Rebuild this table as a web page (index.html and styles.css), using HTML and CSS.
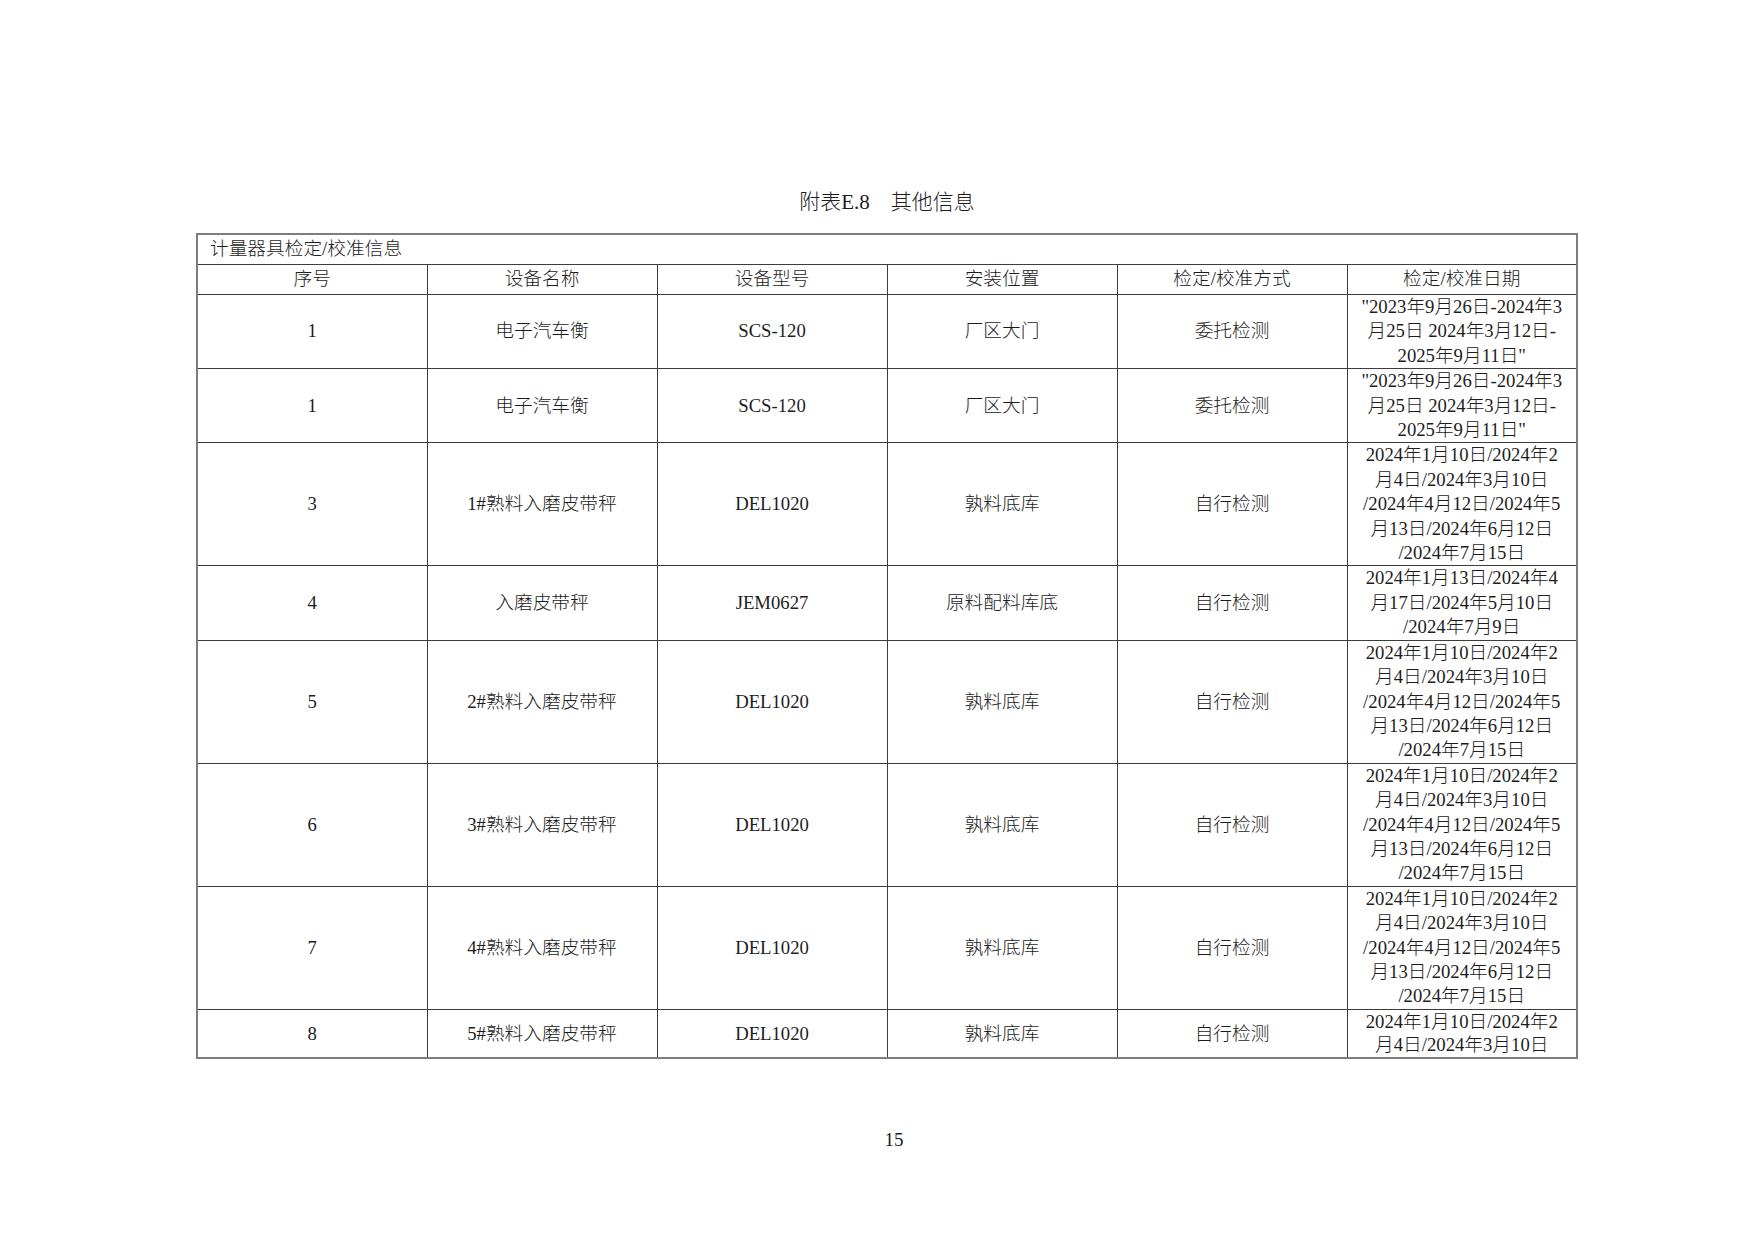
FILE: index.html
```html
<!DOCTYPE html>
<html lang="zh-CN">
<head>
<meta charset="utf-8">
<title>附表E.8 其他信息</title>
<link rel="stylesheet" href="styles.css">
</head>
<body>
<div class="page">
  <h1 class="title">附表E.8&nbsp;&nbsp;&nbsp;&nbsp;其他信息</h1>
  <table class="tbl">
    <colgroup>
      <col><col><col><col><col><col>
    </colgroup>
    <tbody>
      <tr class="single">
        <td class="caption-cell" colspan="6">计量器具检定/校准信息</td>
      </tr>
      <tr class="single">
        <td>序号</td>
        <td>设备名称</td>
        <td>设备型号</td>
        <td>安装位置</td>
        <td>检定/校准方式</td>
        <td>检定/校准日期</td>
      </tr>
      <tr>
        <td>1</td>
        <td>电子汽车衡</td>
        <td>SCS-120</td>
        <td>厂区大门</td>
        <td>委托检测</td>
        <td>"2023年9月26日-2024年3<br>月25日 2024年3月12日-<br>2025年9月11日"</td>
      </tr>
      <tr>
        <td>1</td>
        <td>电子汽车衡</td>
        <td>SCS-120</td>
        <td>厂区大门</td>
        <td>委托检测</td>
        <td>"2023年9月26日-2024年3<br>月25日 2024年3月12日-<br>2025年9月11日"</td>
      </tr>
      <tr>
        <td>3</td>
        <td>1#熟料入磨皮带秤</td>
        <td>DEL1020</td>
        <td>孰料底库</td>
        <td>自行检测</td>
        <td>2024年1月10日/2024年2<br>月4日/2024年3月10日<br>/2024年4月12日/2024年5<br>月13日/2024年6月12日<br>/2024年7月15日</td>
      </tr>
      <tr>
        <td>4</td>
        <td>入磨皮带秤</td>
        <td>JEM0627</td>
        <td>原料配料库底</td>
        <td>自行检测</td>
        <td>2024年1月13日/2024年4<br>月17日/2024年5月10日<br>/2024年7月9日</td>
      </tr>
      <tr>
        <td>5</td>
        <td>2#熟料入磨皮带秤</td>
        <td>DEL1020</td>
        <td>孰料底库</td>
        <td>自行检测</td>
        <td>2024年1月10日/2024年2<br>月4日/2024年3月10日<br>/2024年4月12日/2024年5<br>月13日/2024年6月12日<br>/2024年7月15日</td>
      </tr>
      <tr>
        <td>6</td>
        <td>3#熟料入磨皮带秤</td>
        <td>DEL1020</td>
        <td>孰料底库</td>
        <td>自行检测</td>
        <td>2024年1月10日/2024年2<br>月4日/2024年3月10日<br>/2024年4月12日/2024年5<br>月13日/2024年6月12日<br>/2024年7月15日</td>
      </tr>
      <tr>
        <td>7</td>
        <td>4#熟料入磨皮带秤</td>
        <td>DEL1020</td>
        <td>孰料底库</td>
        <td>自行检测</td>
        <td>2024年1月10日/2024年2<br>月4日/2024年3月10日<br>/2024年4月12日/2024年5<br>月13日/2024年6月12日<br>/2024年7月15日</td>
      </tr>
      <tr class="last">
        <td>8</td>
        <td>5#熟料入磨皮带秤</td>
        <td>DEL1020</td>
        <td>孰料底库</td>
        <td>自行检测</td>
        <td>2024年1月10日/2024年2<br>月4日/2024年3月10日</td>
      </tr>
    </tbody>
  </table>
  <div class="pageno">15</div>
</div>
</body>
</html>
```

FILE: styles.css
```css
html, body {
  margin: 0;
  padding: 0;
  background: #ffffff;
}

body {
  color: #1c1c1c;
  font-family: "Liberation Serif", "Noto Sans CJK SC", serif;
  font-weight: 300;
}

.page {
  width: 1382px;
  padding: 187px 0 0 196px;
}

.title {
  margin: 0 0 16px;
  height: 30px;
  font-size: 21px;
  line-height: 30px;
  font-weight: 300;
  text-align: center;
}

.tbl {
  width: 1382px;
  border-collapse: collapse;
  table-layout: fixed;
  font-size: 18.7px;
  line-height: 24.4px;
  border: 2px solid #7d7d7d;
}

.tbl td {
  border: 1px solid #3c3c3c;
  padding: 0;
  text-align: center;
  vertical-align: middle;
  white-space: nowrap;
  overflow: hidden;
}

.tbl .single td {
  height: 29px;
}

.tbl .last td {
  line-height: 23.6px;
}

.tbl .caption-cell {
  text-align: left;
  padding-left: 12px;
}

.pageno {
  margin-top: 69px;
  padding-left: 14px;
  font-size: 19px;
  line-height: 24px;
  text-align: center;
}
```
